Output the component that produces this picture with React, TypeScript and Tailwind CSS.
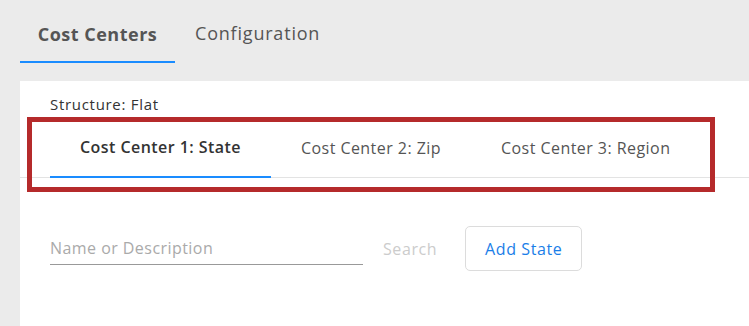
import React from "react"

const font = { fontFamily: '"Open Sans", "Liberation Sans", sans-serif' }

export default function App() {
  const tabs = ["Cost Center 1: State", "Cost Center 2: Zip", "Cost Center 3: Region"]

  return (
    <div className="w-[749px] h-[326px] bg-[#ebebeb] overflow-hidden text-[#444]" style={font}>
      {/* Top tabs */}
      <div className="flex h-[81px] pl-[20px]">
        <div className="w-[155px] flex flex-col justify-end">
          <div className="flex-1 flex items-center justify-center text-[18px] font-bold tracking-[0.5px] text-[#555] pt-[7px]">
            Cost Centers
          </div>
          <div className="h-[2px] bg-[#1a8cff] mb-[18px]" />
        </div>
        <div className="px-[20px] flex items-start pt-[20px] text-[18px] tracking-[0.8px] text-[#555]">Configuration</div>
      </div>

      {/* Panel */}
      <div className="relative ml-[20px] bg-white h-[245px]">
        <div className="pl-[30px] pt-[13px] text-[15px] tracking-[0.7px] text-[#333] leading-[20px]">Structure: Flat</div>

        <div className="flex pl-[30px] mt-[4px] border-b border-[#e3e3e3]">
          {tabs.map((t, i) => (
            <div
              key={t}
              className={`px-[30px] h-[60px] flex items-center text-[16px] tracking-[0.45px] -mb-px ${
                i === 0 ? "font-semibold text-[#333] border-b-2 border-[#1a8cff]" : "text-[#555]"
              }`}
            >
              {t}
            </div>
          ))}
        </div>

        <div className="flex items-start pl-[30px] mt-[48px]">
          <div className="w-[313px] border-b border-[#999] h-[39px] flex items-center pt-[6px] text-[16px] tracking-[0.45px] text-[#aaa]">
            Name or Description
          </div>
          <div className="ml-[20px] h-[39px] flex items-center pt-[6px] text-[16px] tracking-[0.6px] text-[#ccc]">Search</div>
          <button className="ml-[28px] w-[117px] h-[45px] border border-[#dcdcdc] rounded-[5px] text-[16px] tracking-[0.6px] text-[#1a7ee8] bg-white">
            Add State
          </button>
        </div>

        {/* annotation box */}
        <div className="absolute left-[7px] top-[36px] w-[688px] h-[75px] border-[5px] border-[#b52a2b] pointer-events-none" />
      </div>
    </div>
  )
}
